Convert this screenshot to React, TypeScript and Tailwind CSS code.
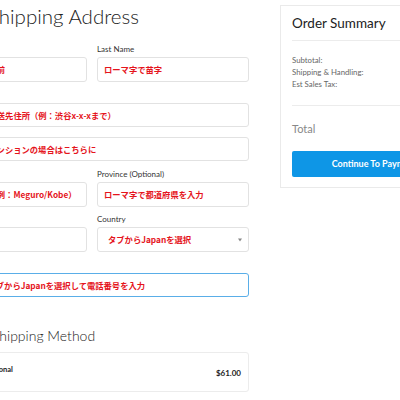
import React from "react";

const jp = { fontFamily: '"Noto Sans CJK JP", "Noto Sans", sans-serif' };
const lato = { fontFamily: 'Lato, "Noto Sans", sans-serif' };

function Label({ text }: { text: string }) {
  return (
    <div className="h-[10px] text-[8px] leading-[10px] text-[#333] whitespace-nowrap" style={lato}>
      {text}
    </div>
  );
}

function Field({
  value,
  h = 25,
  focus = false,
  select = false,
}: {
  value: string;
  h?: number;
  focus?: boolean;
  select?: boolean;
}) {
  return (
    <div
      className={
        "relative flex items-center rounded-[3px] bg-white overflow-hidden " +
        (focus
          ? "border-[1.5px] border-[#5aaee8] pl-[5px]"
          : "border border-[#e2e2e2] pl-[6px]") +
        (select ? " pl-[10px]" : "")
      }
      style={{ height: h }}
    >
      <span
        className="text-[8.3px] font-bold text-[#e5141c] whitespace-nowrap leading-none"
        style={jp}
      >
        {value}
      </span>
      {select && (
        <span className="absolute right-[6px] top-1/2 -translate-y-1/2 w-0 h-0 border-l-[2.5px] border-r-[2.5px] border-t-[3px] border-l-transparent border-r-transparent border-t-[#888]" />
      )}
    </div>
  );
}

export default function App() {
  return (
    <div className="w-[400px] h-[400px] overflow-hidden bg-white">
      <div className="flex items-start ml-[-60px]">
        {/* Left column */}
        <div className="w-[309px] shrink-0 flex flex-col">
          <div
            className="mt-[5px] ml-[48px] text-[20.5px] leading-[22px] font-light text-[#222] whitespace-nowrap"
            style={lato}
          >
            Shipping Address
          </div>

          <div className="mt-[17px] grid grid-cols-[147px_152px] gap-x-[10px]">
            <div className="flex flex-col gap-[3px]">
              <Label text="First Name" />
              <Field value="ローマ字で名前" />
            </div>
            <div className="flex flex-col gap-[3px]">
              <Label text="Last Name" />
              <Field value="ローマ字で苗字" />
            </div>
          </div>

          <div className="mt-[8px] flex flex-col gap-[3px]">
            <Label text="Address" />
            <Field value="ローマ字で配送先住所（例：渋谷x-x-xまで）" h={24} />
          </div>
          <div className="mt-[10px]">
            <Field value="アパート・マンションの場合はこちらに" h={24} />
          </div>

          <div className="mt-[8px] grid grid-cols-[147px_152px] gap-x-[10px]">
            <div className="flex flex-col gap-[3px]">
              <Label text="City" />
              <Field value="市区町村名（例：Meguro/Kobe）" />
            </div>
            <div className="flex flex-col gap-[3px]">
              <Label text="Province (Optional)" />
              <Field value="ローマ字で都道府県を入力" />
            </div>
          </div>

          <div className="mt-[7px] grid grid-cols-[147px_152px] gap-x-[10px]">
            <div className="flex flex-col gap-[3px]">
              <Label text="Postal Code" />
              <Field value="" />
            </div>
            <div className="flex flex-col gap-[3px]">
              <Label text="Country" />
              <Field value="タブからJapanを選択" select />
            </div>
          </div>

          <div className="mt-[8px] flex flex-col gap-[3px]">
            <Label text="Phone" />
            <Field value="国コードはタブからJapanを選択して電話番号を入力" h={24} focus />
          </div>

          <div
            className="mt-[30px] ml-[52px] text-[14px] leading-[18px] font-light text-[#222] whitespace-nowrap"
            style={lato}
          >
            Shipping Method
          </div>

          <div className="mt-[7px] h-[40px] border border-[#ececec] rounded-[3px] flex items-center justify-between pl-[12px] pr-[7px]">
            <div className="flex items-start gap-[8px] self-start mt-[12px]">
              <span className="w-[9px] h-[9px] rounded-full border border-[#bbb]" />
              <span className="text-[7.5px] leading-[10px] font-bold text-[#222] whitespace-nowrap" style={lato}>
                International
              </span>
            </div>
            <span className="text-[8px] font-bold text-[#222] mt-[2px]" style={lato}>
              $61.00
            </span>
          </div>
        </div>

        {/* Right column */}
        <div className="ml-[31px] mt-[5px] w-[189px] shrink-0 border border-[#eaeaea] px-[11px] pb-[10px] flex flex-col">
          <div className="pt-[8px] text-[13.5px] leading-[18px] text-[#222] whitespace-nowrap" style={lato}>
            Order Summary
          </div>
          <div className="mt-[8px] h-px bg-[#ececec]" />
          <div className="mt-[13px] flex flex-col text-[7.8px] leading-[12px] text-[#666]" style={lato}>
            <span>Subtotal:</span>
            <span>Shipping &amp; Handling:</span>
            <span>Est Sales Tax:</span>
          </div>
          <div className="mt-[15px] h-px bg-[#ececec]" />
          <div className="mt-[16px] text-[11px] leading-[14px] text-[#888]" style={lato}>
            Total
          </div>
          <div className="mt-[15px] h-[26px] rounded-[2px] bg-[#0e96e6] flex items-center justify-center">
            <span className="text-[9px] font-bold text-white whitespace-nowrap" style={lato}>
              Continue To Payment
            </span>
          </div>
        </div>
      </div>
    </div>
  );
}
